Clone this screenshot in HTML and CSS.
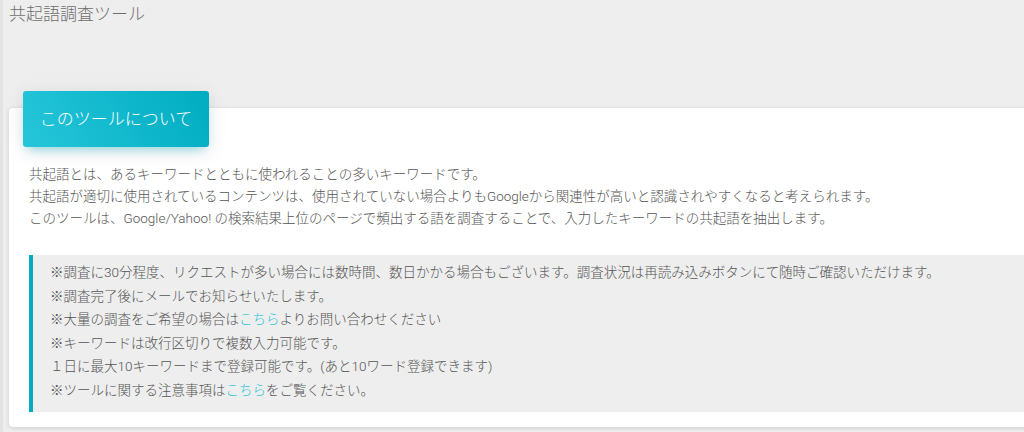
FILE: index.html
```html
<!DOCTYPE html>
<html lang="ja">
<head>
    <meta charset="utf-8">
    <title>共起語調査ツール</title>
    <link rel="stylesheet" href="styles.css">
</head>
<body>
    <!-- Page title -->
    <div class="page-title">共起語調査ツール</div>

    <!-- About card -->
    <div class="card">
        <div class="card-header">このツールについて</div>
        <div class="card-body">
            <p class="intro">
                共起語とは、あるキーワードとともに使われることの多いキーワードです。<br>
                共起語が適切に使用されているコンテンツは、使用されていない場合よりもGoogleから関連性が高いと認識されやすくなると考えられます。<br>
                このツールは、Google/Yahoo! の検索結果上位のページで頻出する語を調査することで、入力したキーワードの共起語を抽出します。
            </p>
            <div class="notice">
                ※調査に30分程度、リクエストが多い場合には数時間、数日かかる場合もございます。調査状況は再読み込みボタンにて随時ご確認いただけます。<br>
                ※調査完了後にメールでお知らせいたします。<br>
                ※大量の調査をご希望の場合は<a href="#">こちら</a>よりお問い合わせください<br>
                ※キーワードは改行区切りで複数入力可能です。<br>
                １日に最大10キーワードまで登録可能です。(あと10ワード登録できます)<br>
                ※ツールに関する注意事項は<a href="#">こちら</a>をご覧ください。
            </div>
        </div>
    </div>
</body>
</html>
```

FILE: styles.css
```css
html, body {
    overflow: hidden;
}

body {
    margin: 0;
    padding: 0 0 0 9px;
    height: 432px;
    box-sizing: border-box;
    font-family: Roboto, "Noto Sans CJK JP", sans-serif;
    font-weight: 300;
    color: #555;
    background: linear-gradient(to right, #e3e3e3 0, #e3e3e3 3px, #eeeeee 3px);
}

/* Page title */
.page-title {
    font-size: 17px;
    line-height: 28px;
    color: #6f6f6f;
}

/* Card */
.card {
    margin-top: 80px;
    margin-right: -30px;
    background: #fff;
    border-radius: 4px;
    box-shadow: 0 1px 4px rgba(0, 0, 0, 0.14);
    padding-bottom: 15px;
}

.card-header {
    display: inline-block;
    margin: -17px 0 0 14px;
    width: 186px;
    height: 56px;
    box-sizing: border-box;
    line-height: 56px;
    text-align: center;
    font-size: 17px;
    color: #fff;
    border-radius: 3px;
    background: linear-gradient(60deg, #26c6da, #00acc1);
    box-shadow: 0 4px 20px 0 rgba(0, 0, 0, 0.10), 0 7px 10px -5px rgba(0, 188, 212, 0.4);
}

.card-body {
    padding: 0 0 0 20px;
}

.intro {
    margin: 16px 0 26px;
    font-size: 13.5px;
    line-height: 22px;
}

.notice {
    background: #eeeeee;
    border-left: 4px solid #00acc1;
    padding: 6px 0 10px 17px;
    font-size: 13.5px;
    line-height: 23.5px;
    white-space: nowrap;
}

.notice a {
    color: #26c6da;
    text-decoration: none;
}
```
